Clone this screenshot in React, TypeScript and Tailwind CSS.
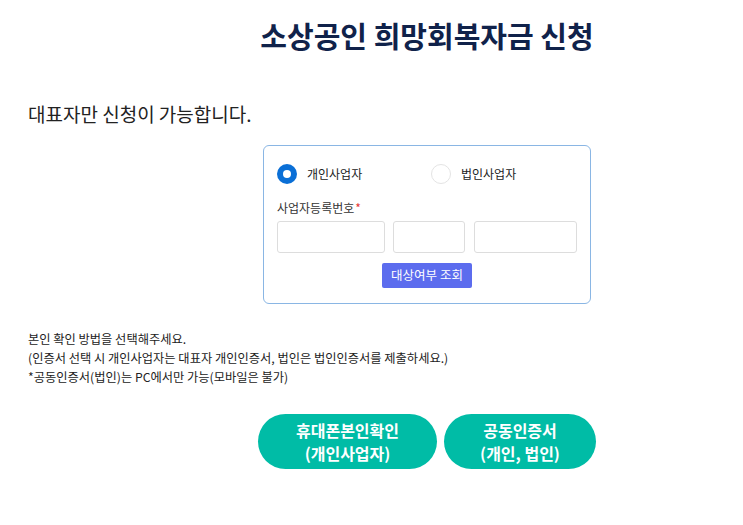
export default function App() {
  const font = { fontFamily: '"Noto Sans CJK KR", "Noto Sans", sans-serif' };

  return (
    <div className="min-h-[525px] w-full overflow-hidden bg-white text-[#222]" style={font}>
      <div className="ml-[28px] w-[798px] pt-[16px]">
        <h1 className="text-center text-[29px] font-semibold leading-[38px] text-[#10224a]">
          소상공인 희망회복자금 신청
        </h1>

        <p className="mt-[48px] text-[19px] leading-[24px] text-[#222]">대표자만 신청이 가능합니다.</p>

        <div className="mx-auto mt-[19px] w-[328px] rounded-[6px] border border-[#8ab6e4] px-[13px] pt-[18px] pb-[15px]">
          <div className="grid grid-cols-2 gap-x-[8px]">
            <label className="flex items-center gap-[10px]">
              <span className="flex h-[20px] w-[20px] items-center justify-center rounded-full bg-[#0a6fd6]">
                <span className="h-[8px] w-[8px] rounded-full bg-white" />
              </span>
              <span className="text-[12px] text-[#222]">개인사업자</span>
            </label>
            <label className="flex items-center gap-[10px]">
              <span className="h-[20px] w-[20px] rounded-full border border-[#e4e4e4] bg-white" />
              <span className="text-[12px] text-[#222]">법인사업자</span>
            </label>
          </div>

          <div className="mt-[16px] text-[12px] leading-[16px] text-[#333]">
            사업자등록번호<span className="ml-[1px] text-[#e53935]">*</span>
          </div>

          <div className="mt-[5px] flex gap-[8px]">
            <input className="h-[32px] w-[108px] rounded-[3px] border border-[#dddddd] outline-none" />
            <input className="h-[32px] w-[72px] rounded-[3px] border border-[#dddddd] outline-none" />
            <input className="ml-[1px] h-[32px] w-[103px] rounded-[3px] border border-[#dddddd] outline-none" />
          </div>

          <div className="mt-[10px] flex justify-center">
            <button className="h-[25px] w-[90px] rounded-[2px] bg-[#5c6cee] text-[12.5px] text-white">
              대상여부 조회
            </button>
          </div>
        </div>

        <div className="mt-[26px] text-[12.25px] leading-[19px] text-[#222]">
          <p>본인 확인 방법을 선택해주세요.</p>
          <p>(인증서 선택 시 개인사업자는 대표자 개인인증서, 법인은 법인인증서를 제출하세요.)</p>
          <p>*공동인증서(법인)는 PC에서만 가능(모바일은 불가)</p>
        </div>

        <div className="mt-[27px] flex justify-center gap-[7px]">
          <button className="h-[55px] w-[179px] rounded-full bg-[#00bca6] text-center text-[16px] font-bold leading-[23px] text-white">
            휴대폰본인확인
            <br />
            (개인사업자)
          </button>
          <button className="h-[55px] w-[152px] rounded-full bg-[#00bca6] text-center text-[16px] font-bold leading-[23px] text-white">
            공동인증서
            <br />
            (개인, 법인)
          </button>
        </div>
      </div>
    </div>
  );
}
